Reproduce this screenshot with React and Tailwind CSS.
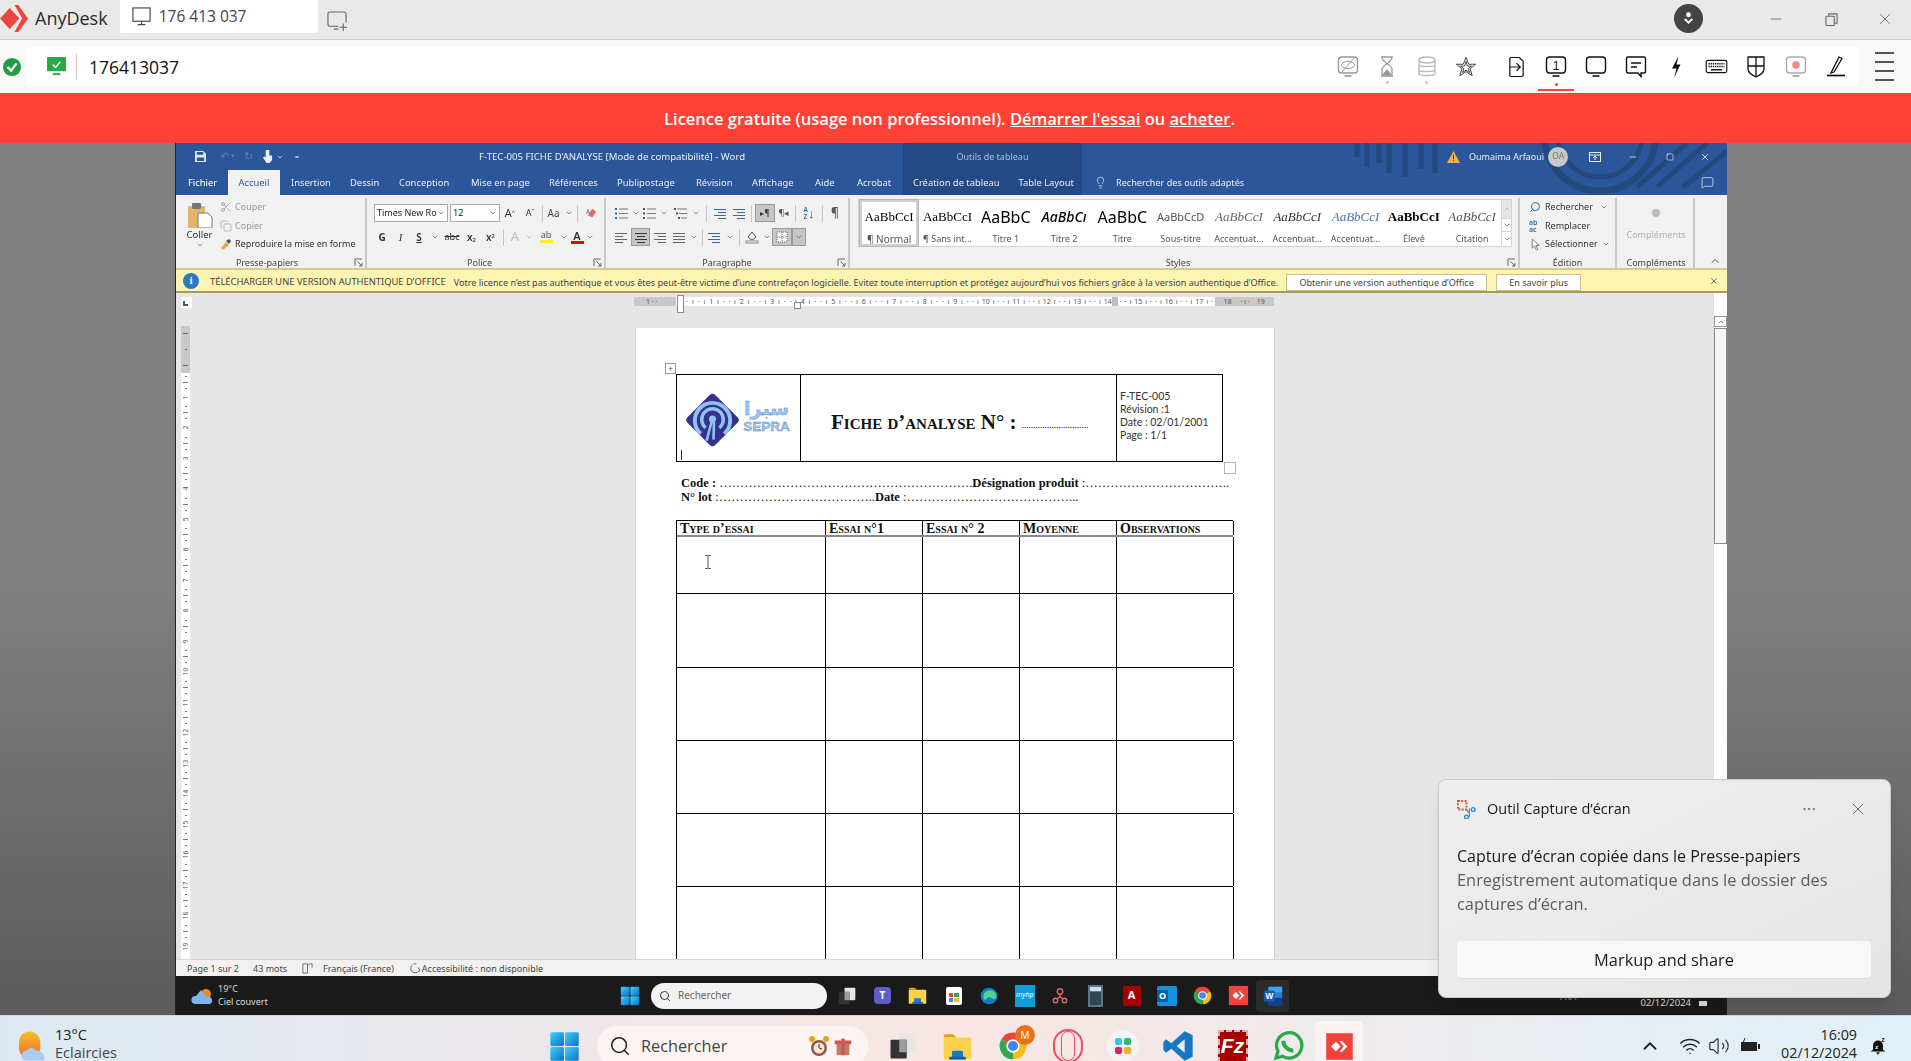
import { ChevronDown, ChevronUp, Lightbulb, Minus, Search, X, Wifi, Volume2, MoreHorizontal, Scissors, Copy, MessageSquare, Square } from 'lucide-react';

const RIBBON_TABS = [
  { label: 'Insertion', w: 'w-[59px]' },
  { label: 'Dessin', w: 'w-[49px]' },
  { label: 'Conception', w: 'w-[72px]' },
  { label: 'Mise en page', w: 'w-[78px]' },
  { label: 'Références', w: 'w-[68px]' },
  { label: 'Publipostage', w: 'w-[79px]' },
  { label: 'Révision', w: 'w-[56px]' },
  { label: 'Affichage', w: 'w-[63px]' },
  { label: 'Aide', w: 'w-[42px]' },
  { label: 'Acrobat', w: 'w-[57px]' },
];

const STYLE_ITEMS = [
  { sample: 'AaBbCcI', label: '¶ Normal', cls: "font-['Liberation_Serif'] text-[13px] text-black", selected: true },
  { sample: 'AaBbCcI', label: '¶ Sans int...', cls: "font-['Liberation_Serif'] text-[13px] text-black" },
  { sample: 'AaBbC', label: 'Titre 1', cls: 'text-[16px] text-black' },
  { sample: 'AaBbCı', label: 'Titre 2', cls: 'text-[14px] italic font-medium text-black' },
  { sample: 'AaBbC', label: 'Titre', cls: 'text-[16px] text-black' },
  { sample: 'AaBbCcD', label: 'Sous-titre', cls: 'text-[11px] text-[#555]' },
  { sample: 'AaBbCcI', label: 'Accentuat...', cls: "font-['Liberation_Serif'] text-[13px] italic text-[#666]" },
  { sample: 'AaBbCcI', label: 'Accentuat...', cls: "font-['Liberation_Serif'] text-[13px] italic text-[#333]" },
  { sample: 'AaBbCcI', label: 'Accentuat...', cls: "font-['Liberation_Serif'] text-[13px] italic text-[#4472c4]" },
  { sample: 'AaBbCcI', label: 'Élevé', cls: "font-['Liberation_Serif'] text-[13px] font-bold text-black" },
  { sample: 'AaBbCcI', label: 'Citation', cls: "font-['Liberation_Serif'] text-[13px] italic text-[#555]" },
];

const HEAD_COLS = ['Type d’essai', 'Essai n°1', 'Essai n° 2', 'Moyenne', 'Observations'];
const ROW_HEIGHTS = ['h-[57px]', 'h-[74px]', 'h-[73px]', 'h-[73px]', 'h-[73px]', 'h-[80px]'];
const CM = [1, 2, 3, 4, 5, 6, 7, 8, 9, 10, 11, 12, 13, 14, 15, 16, 17, 18, 19];

function MonitorIcon({ children, stroke = '#111', stand = '#444', className = 'w-[24px] h-[24px]' }) {
  return (
    <svg viewBox="0 0 24 24" className={className} fill="none">
      <rect x="2.5" y="2" width="19" height="16" rx="3" stroke={stroke} strokeWidth="1.4" />
      <rect x="8.5" y="20" width="7" height="2" fill={stand} />
      {children}
    </svg>
  );
}

function AnyDeskMark({ className }) {
  return (
    <svg viewBox="0 0 30 28" className={className}>
      <path d="M0 14 L10 3 L20 14 L10 25Z" fill="#ef443b" />
      <path d="M15 0 L19 0 L29 14 L19 28 L15 28 L23 14Z" fill="#ef443b" />
    </svg>
  );
}

function WinLogo({ className }) {
  return (
    <svg viewBox="0 0 24 24" className={className}>
      <defs>
        <linearGradient id="wl" x1="0" y1="0" x2="1" y2="1">
          <stop offset="0" stopColor="#3fd0fb" />
          <stop offset="1" stopColor="#0a72c8" />
        </linearGradient>
      </defs>
      <rect x="1" y="1" width="10.6" height="10.6" rx="1" fill="url(#wl)" />
      <rect x="12.4" y="1" width="10.6" height="10.6" rx="1" fill="url(#wl)" />
      <rect x="1" y="12.4" width="10.6" height="10.6" rx="1" fill="url(#wl)" />
      <rect x="12.4" y="12.4" width="10.6" height="10.6" rx="1" fill="url(#wl)" />
    </svg>
  );
}

function ChromeIcon({ className }) {
  return (
    <svg viewBox="0 0 24 24" className={className}>
      <path d="M12 12 L3.3 7A10 10 0 0 1 20.7 7Z" fill="#e8453c" />
      <path d="M12 12 L20.7 7A10 10 0 0 1 12 22Z" fill="#f9bc15" />
      <path d="M12 12 L12 22A10 10 0 0 1 3.3 7Z" fill="#34a853" />
      <circle cx="12" cy="12" r="5" fill="#fff" />
      <circle cx="12" cy="12" r="3.8" fill="#4285f4" />
    </svg>
  );
}

function FolderIcon({ className }) {
  return (
    <svg viewBox="0 0 24 24" className={className}>
      <path d="M2 4.5A1.5 1.5 0 0 1 3.5 3H9l2 2.5H2Z" fill="#e0a210" />
      <rect x="2" y="5.5" width="20" height="16" rx="1" fill="#fbd24c" />
      <rect x="8" y="15" width="8" height="5" rx="1" fill="#1c78c8" />
      <rect x="6" y="19.5" width="12" height="2" fill="#0f5ea8" />
    </svg>
  );
}

function TaskViewIcon({ className }) {
  return (
    <svg viewBox="0 0 24 24" className={className}>
      <rect x="9" y="2" width="13" height="15" rx="1" fill="#e6e6e6" />
      <rect x="2" y="7" width="13" height="15" rx="1" fill="#333" />
      <rect x="9" y="7" width="6" height="10" fill="#9c9c9c" />
    </svg>
  );
}

function WordIcon({ className }) {
  return (
    <svg viewBox="0 0 24 24" className={className}>
      <rect x="7" y="2" width="15" height="20" rx="1" fill="#2b7cd3" />
      <rect x="7" y="2" width="15" height="6" fill="#41a5ee" />
      <rect x="7" y="14" width="15" height="8" fill="#103f91" />
      <rect x="2" y="6" width="12" height="12" rx="1" fill="#185abd" />
      <text x="8" y="15.5" fontSize="9" fontWeight="700" fill="#fff" textAnchor="middle" fontFamily="Liberation Sans">W</text>
    </svg>
  );
}

function AnyDeskTile({ className }) {
  return (
    <svg viewBox="0 0 24 24" className={className}>
      <rect x="1" y="1" width="22" height="22" fill="#ef443b" />
      <path d="M5 12 L9 8 L13 12 L9 16Z" fill="#fff" />
      <path d="M12 7.5 L14 7.5 L18.5 12 L14 16.5 L12 16.5 L15.5 12Z" fill="#fff" />
    </svg>
  );
}

function SmallLines({ align = 'left', color = '#666' }) {
  const rows = [
    { y: 3, w: 12 },
    { y: 6, w: 8 },
    { y: 9, w: 12 },
    { y: 12, w: 8 },
  ];
  return (
    <svg viewBox="0 0 14 15" className="w-[14px] h-[15px]">
      {rows.map((r) => {
        const width = align === 'justify' ? 12 : r.w;
        const x = align === 'center' ? 7 - width / 2 : align === 'right' ? 13 - width : 1;
        return <rect key={r.y} x={x} y={r.y} width={width} height="1" fill={color} />;
      })}
    </svg>
  );
}

function ListIcon({ kind = 'bullet' }) {
  const dot = kind === 'bullet' ? '#2b6cb0' : '#555';
  return (
    <svg viewBox="0 0 15 15" className="w-[15px] h-[15px]">
      {[3, 7.5, 12].map((y, i) => (
        <g key={y}>
          <rect x={kind === 'multi' ? 1 + i * 2 : 1} y={y - 1} width="2" height="2" fill={dot} />
          <rect x={kind === 'multi' ? 4 + i * 2 : 5} y={y - 0.5} width={kind === 'multi' ? 10 - i * 2 : 9} height="1" fill="#777" />
        </g>
      ))}
    </svg>
  );
}

function Caret({ className = 'text-[#555]' }) {
  return <ChevronDown strokeWidth={2} className={`w-[8px] h-[8px] shrink-0 ${className}`} />;
}

function Cell({ w, active, children }) {
  return (
    <div className={`${w} h-[18px] flex items-center justify-center shrink-0 ${active ? 'bg-[#c6c6c6] border border-[#9a9a9a]' : ''}`}>
      {children}
    </div>
  );
}

function Sep({ className = 'mx-[2px]' }) {
  return <div className={`w-px h-[17px] bg-[#c6c6c6] shrink-0 ${className}`} />;
}

function Launcher() {
  return (
    <svg viewBox="0 0 9 9" className="absolute right-[2px] bottom-[3px] w-[9px] h-[9px]" fill="none" stroke="#666" strokeWidth="1">
      <path d="M1 8V1H8" />
      <path d="M3.5 3.5 L8 8 M5 8H8V5" />
    </svg>
  );
}

function Group({ w, label, launcher, labelCls = '', children }) {
  return (
    <div className={`${w} h-[72px] mt-[3px] relative flex flex-col border-r-2 border-[#c8c8c8] shrink-0`}>
      <div className="flex-1 min-h-0">{children}</div>
      <div className={`h-[15px] pt-[1px] text-center text-[9px] leading-[14px] text-[#444] ${labelCls}`}>{label}</div>
      {launcher && <Launcher />}
    </div>
  );
}

function ClipboardGroup() {
  return (
    <Group w="w-[191px]" label="Presse-papiers" launcher labelCls="pr-[7px]">
      <div className="flex">
        <div className="w-[41px] pl-[6px] pt-[4px] flex flex-col items-center">
          <svg viewBox="0 0 26 26" className="w-[26px] h-[26px]">
            <rect x="1" y="4" width="17" height="22" rx="1" fill="#e2b56b" />
            <rect x="5" y="1" width="9" height="6" rx="1" fill="#777" />
            <path d="M11 11H21L25 15V26H11Z" fill="#fff" stroke="#777" />
          </svg>
          <div className="text-[9.5px] leading-[12px] mt-[1px] text-[#333]">Coller</div>
          <Caret />
        </div>
        <div className="ml-[3px] flex flex-col text-[9px] leading-[18.5px]">
          <div className="flex items-center gap-[3px] text-[#9a9a9a]">
            <Scissors className="w-[12px] h-[12px] text-[#aaa]" />
            Couper
          </div>
          <div className="flex items-center gap-[3px] text-[#9a9a9a]">
            <Copy className="w-[12px] h-[12px] text-[#bbb]" />
            Copier
          </div>
          <div className="flex items-center gap-[3px] text-[#333] whitespace-nowrap">
            <svg viewBox="0 0 12 12" className="w-[12px] h-[12px]">
              <path d="M1 10 L6 4 L9 7 L3 12Z" fill="#e2a94a" />
              <path d="M6 3 L9 1 L11 3 L9 6Z" fill="#555" />
            </svg>
            Reproduire la mise en forme
          </div>
        </div>
      </div>
    </Group>
  );
}

function FontGroup() {
  return (
    <Group w="w-[239px]" label="Police" launcher labelCls="pr-[12px]">
      <div className="flex items-center h-[18px] mt-[6px] pl-[7px]">
        <div className="w-[74px] h-[18px] bg-white border border-[#ababab] flex items-center justify-between px-[2px] text-[9px] text-[#222] whitespace-nowrap overflow-hidden">
          Times New Ro
          <Caret />
        </div>
        <div className="w-[50px] ml-[2px] h-[18px] bg-white border border-[#ababab] flex items-center justify-between px-[2px] text-[9px] text-[#222]">
          12
          <Caret />
        </div>
        <Cell w="w-[20px]"><span className="text-[11px] text-[#333]">A<sup className="text-[6px]">^</sup></span></Cell>
        <Cell w="w-[20px]"><span className="text-[9px] text-[#333]">A<sup className="text-[6px]">ˇ</sup></span></Cell>
        <Sep />
        <Cell w="w-[17px]"><span className="text-[10px] text-[#444]">Aa</span></Cell>
        <Cell w="w-[13px]"><Caret /></Cell>
        <Sep />
        <Cell w="w-[22px]">
          <svg viewBox="0 0 14 14" className="w-[13px] h-[13px]">
            <path d="M3 9 L8 2 L12 5 L8 11Z" fill="#e26a6a" />
            <text x="1" y="8" fontSize="7" fill="#666" fontFamily="Noto Sans">A</text>
          </svg>
        </Cell>
      </div>
      <div className="flex items-center h-[18px] mt-[6px] pl-[6px] text-[10px] text-[#333]">
        <Cell w="w-[18px]"><span className="font-bold">G</span></Cell>
        <Cell w="w-[19px]"><span className="italic font-['Liberation_Serif'] text-[11px]">I</span></Cell>
        <Cell w="w-[18px]"><span className="underline font-semibold">S</span></Cell>
        <Cell w="w-[14px]"><Caret /></Cell>
        <Cell w="w-[20px]"><span className="line-through text-[9px]">abc</span></Cell>
        <Cell w="w-[19px]"><span className="font-semibold">x<sub className="text-[6px]">2</sub></span></Cell>
        <Cell w="w-[19px]"><span className="font-semibold">x<sup className="text-[6px]">2</sup></span></Cell>
        <Sep className="mx-[3px]" />
        <Cell w="w-[16px]"><span className="text-[13px] text-[#bbb]">A</span></Cell>
        <Cell w="w-[12px]"><Caret className="text-[#aaa]" /></Cell>
        <Cell w="w-[22px]">
          <div className="flex flex-col items-center leading-[8px]">
            <span className="text-[9px] text-[#555]">ab</span>
            <span className="w-[13px] h-[3px] mt-[1px] bg-[#ffee22]" />
          </div>
        </Cell>
        <Cell w="w-[13px]"><Caret /></Cell>
        <Cell w="w-[14px]">
          <div className="flex flex-col items-center leading-[10px]">
            <span className="text-[11px] font-semibold text-[#333]">A</span>
            <span className="w-[13px] h-[3px] bg-[#e00]" />
          </div>
        </Cell>
        <Cell w="w-[12px]"><Caret /></Cell>
      </div>
    </Group>
  );
}

function ParagraphGroup() {
  return (
    <Group w="w-[244px]" label="Paragraphe" launcher>
      <div className="flex items-center h-[18px] mt-[6px] pl-[5px]">
        <Cell w="w-[20px]"><ListIcon /></Cell>
        <Cell w="w-[10px]"><Caret /></Cell>
        <Cell w="w-[16px]"><ListIcon kind="num" /></Cell>
        <Cell w="w-[14px]"><Caret /></Cell>
        <Cell w="w-[18px]"><ListIcon kind="multi" /></Cell>
        <Cell w="w-[14px]"><Caret /></Cell>
        <Sep className="mx-[3px]" />
        <Cell w="w-[20px]"><SmallLines color="#2b6cb0" align="right" /></Cell>
        <Cell w="w-[18px]"><SmallLines color="#2b6cb0" align="right" /></Cell>
        <Sep className="mx-[3px]" />
        <Cell w="w-[20px]" active><span className="text-[8px] text-[#333]">▸¶</span></Cell>
        <Cell w="w-[18px]"><span className="text-[9px] text-[#555]">¶◂</span></Cell>
        <Sep className="mx-[2px]" />
        <Cell w="w-[22px]">
          <div className="flex items-center">
            <div className="flex flex-col text-[6.5px] leading-[7px] font-semibold">
              <span className="text-[#2b6cb0]">A</span>
              <span className="text-[#2b6cb0]">Z</span>
            </div>
            <span className="text-[13px] leading-[13px] text-[#555]">↓</span>
          </div>
        </Cell>
        <Sep className="mx-[2px]" />
        <Cell w="w-[20px]"><span className="text-[12px] font-semibold text-[#555]">¶</span></Cell>
      </div>
      <div className="flex items-center h-[18px] mt-[6px] pl-[5px]">
        <Cell w="w-[20px]"><SmallLines /></Cell>
        <Cell w="w-[19px]" active><SmallLines align="center" color="#333" /></Cell>
        <Cell w="w-[20px]"><SmallLines align="right" /></Cell>
        <Cell w="w-[18px]"><SmallLines align="justify" /></Cell>
        <Cell w="w-[12px]"><Caret /></Cell>
        <Sep />
        <Cell w="w-[18px]"><SmallLines color="#2b6cb0" align="right" /></Cell>
        <Cell w="w-[14px]"><Caret /></Cell>
        <Sep />
        <Cell w="w-[20px]">
          <svg viewBox="0 0 14 14" className="w-[14px] h-[14px]" fill="none" stroke="#555">
            <path d="M3 7 L7 2 L11 7 L7 10Z" />
            <rect x="1" y="11" width="12" height="2" fill="#fff" stroke="#888" />
          </svg>
        </Cell>
        <Cell w="w-[10px]"><Caret /></Cell>
        <Cell w="w-[20px]" active>
          <svg viewBox="0 0 12 12" className="w-[12px] h-[12px]" fill="none" stroke="#666" strokeDasharray="1 1">
            <rect x="1" y="1" width="10" height="10" fill="#fff" />
            <path d="M6 1V11M1 6H11" />
          </svg>
        </Cell>
        <Cell w="w-[14px]" active><Caret /></Cell>
      </div>
    </Group>
  );
}

function StylesGroup() {
  return (
    <Group w="w-[670px]" label="Styles" launcher labelCls="pr-[12px]">
      <div className="ml-[8px] mt-[1px] w-[654px] h-[48px] flex bg-white border border-[#d4d4d4]">
        <div className="flex-1 flex pl-[1px]">
          {STYLE_ITEMS.map((s, i) => (
            <div
              key={i}
              className={`w-[58.3px] h-[46px] flex flex-col items-center overflow-hidden ${s.selected ? 'border-[2px] border-[#cfcfcf] outline outline-[#b5b5b5] pt-[3px]' : 'pt-[5px]'}`}
            >
              <div className={`h-[22px] leading-[24px] whitespace-nowrap ${s.cls}`}>{s.sample}</div>
              <div className={`mt-[3px] leading-[18px] text-[#555] whitespace-nowrap ${s.selected ? 'text-[10px]' : 'text-[9px]'}`}>{s.label}</div>
            </div>
          ))}
        </div>
        <div className="w-[12px] flex flex-col border-l border-[#d4d4d4] text-[#777]">
          <div className="h-[18px] bg-[#e6e6e6] flex items-center justify-center"><ChevronUp className="w-[8px] h-[8px] text-[#aaa]" /></div>
          <div className="h-[14px] border-y border-[#d4d4d4] flex items-center justify-center"><Caret /></div>
          <div className="flex-1 flex items-center justify-center"><Caret /></div>
        </div>
      </div>
    </Group>
  );
}

function EditGroup() {
  return (
    <Group w="w-[97px]" label="Édition">
      <div className="pl-[9px] flex flex-col text-[9px] leading-[18.5px] text-[#333]">
        <div className="flex items-center gap-[4px]">
          <Search className="w-[12px] h-[12px] text-[#2b6cb0] -scale-x-100" />
          Rechercher
          <Caret className="ml-[3px] text-[#555]" />
        </div>
        <div className="flex items-center gap-[4px]">
          <span className="w-[12px] text-[7px] leading-[7px] font-semibold text-[#2b6cb0]">ab ac</span>
          Remplacer
        </div>
        <div className="flex items-center gap-[4px]">
          <svg viewBox="0 0 12 14" className="w-[12px] h-[13px]" fill="#fff" stroke="#777">
            <path d="M3 1V11L5.5 8.5L7.5 13L9 12L7 8H10.5Z" />
          </svg>
          Sélectionner
          <Caret />
        </div>
      </div>
    </Group>
  );
}

function AddinsGroup() {
  return (
    <Group w="w-[78px]" label="Compléments" labelCls="pl-[2px]">
      <div className="flex flex-col items-center pt-[11px] pl-[2px]">
        <div className="w-[8px] h-[8px] rounded-full bg-[#bdbdbd]" />
        <div className="text-[9px] mt-[11px] text-[#b0b0b0]">Compléments</div>
      </div>
    </Group>
  );
}

function Ribbon() {
  return (
    <div className="h-[75px] flex bg-[#f1f1f1] border-b-2 border-[#d6c98a] relative">
      <ClipboardGroup />
      <FontGroup />
      <ParagraphGroup />
      <StylesGroup />
      <EditGroup />
      <AddinsGroup />
      <ChevronUp className="absolute right-[6px] bottom-[1px] w-[12px] h-[12px] text-[#555]" />
    </div>
  );
}

function HorizontalRuler() {
  return (
    <div className="relative ml-[443px] w-[640px] h-[9px] mt-[4px] flex items-center bg-white text-[7px] leading-[9px] text-[#555]">
      <div className="w-[42px] h-full bg-[#c8c8c8] shrink-0 pl-[12px]">1 · ·</div>
      <div className="w-[20px] shrink-0 flex justify-around pl-[8px]">
        <span>·</span>
        <span>ı</span>
      </div>
      {CM.slice(0, 17).map((n) => (
        <div key={n} className="w-[30.5px] shrink-0 flex justify-around">
          <span>·</span>
          <span>ı</span>
          <span>{n}</span>
          <span>ı</span>
          <span>·</span>
        </div>
      ))}
      <div className="flex-1 h-full bg-[#c8c8c8] flex pl-[9px]">
        <span>18</span>
        <span className="ml-[9px]">· ı ·</span>
        <span className="ml-[7px]">19</span>
      </div>
      <div className="absolute left-[43px] -top-[2px] w-[7px] h-[18px] bg-white border border-[#888]" />
      <div className="absolute left-[160px] top-[5px] w-[7px] h-[7px] bg-white border border-[#888]" />
      <div className="absolute left-[478px] top-0 w-[6px] h-[9px] bg-[#bdbdbd]" />
    </div>
  );
}

function VerticalRuler() {
  return (
    <div className="w-[15px] shrink-0 pl-[5px] flex flex-col bg-[#e6e6e6]">
      <div className="w-[11px] h-[11px] mt-[4px] bg-white flex items-end pl-[2px] pb-[2px]">
        <div className="w-[5px] h-[5px] border-l-2 border-b-2 border-[#555]" />
      </div>
      <div className="w-[9px] h-[47px] mt-[18px] bg-[#c8c8c8] flex flex-col items-center justify-around">
        <div className="w-[5px] h-px bg-[#666]" />
        <div className="w-[2px] h-px bg-[#666]" />
        <div className="w-[5px] h-px bg-[#666]" />
      </div>
      <div className="w-[9px] flex-1 bg-white flex flex-col items-center overflow-hidden">
        {CM.map((n) => (
          <div key={n} className="h-[30.5px] shrink-0 flex flex-col items-center justify-around text-[6.5px] leading-[7px] text-[#555]">
            <div className="w-[2px] h-px bg-[#777]" />
            <div className="w-[5px] h-px bg-[#777]" />
            <div className="w-[2px] h-px bg-[#777]" />
            <div className="-rotate-90">{n}</div>
          </div>
        ))}
      </div>
    </div>
  );
}

function SepraLogo() {
  return (
    <div className="flex items-center pl-[9px] pt-[3px] h-full">
      <svg viewBox="0 0 54 54" className="w-[53px] h-[54px] shrink-0">
        <rect x="7" y="7" width="40" height="40" rx="4" transform="rotate(45 27 27)" fill="#34318f" />
        <path d="M15 41A18 18 0 1 1 39 41" fill="none" stroke="#8fc4ee" strokeWidth="4" />
        <path d="M20 35A11 11 0 1 1 34 35" fill="none" stroke="#8fc4ee" strokeWidth="3.5" />
        <circle cx="27" cy="26" r="3.6" fill="#8fc4ee" />
        <path d="M26 29L21 48M28.5 29L28 47" stroke="#8fc4ee" strokeWidth="2.6" />
      </svg>
      <div className="ml-[4px] w-[47px] flex flex-col items-center">
        <span className="font-['DejaVu_Sans'] font-bold text-[19px] leading-[20px] -mt-[6px] text-[#9cc8ef] [-webkit-text-stroke:0.4px_#5a7ec0]">سبرا</span>
        <span className="font-['Liberation_Sans'] font-bold text-[13.5px] leading-[16px] mt-[1px] text-[#9cc8ef] [-webkit-text-stroke:0.4px_#5a7ec0]">SEPRA</span>
      </div>
    </div>
  );
}

function DocHeader() {
  return (
    <div className="relative w-[547px] h-[88px] grid grid-cols-[124px_316px_107px] border border-black">
      <div className="border-r border-black relative">
        <SepraLogo />
        <div className="absolute left-[4px] bottom-[1px] w-px h-[10px] bg-[#222]" />
      </div>
      <div className="border-r border-black flex items-center pl-[30px] pt-[9px] font-['Liberation_Serif'] font-bold text-[21px] text-[#111] [font-variant-caps:small-caps] whitespace-nowrap">
        Fiche d’analyse N° :
        <span className="ml-[5px] font-normal text-[10px] pt-[4px] tracking-[-0.2px]">.............................</span>
      </div>
      <div className="pl-[3px] flex flex-col justify-center font-['Lato'] text-[10.5px] leading-[13.2px] text-[#333] pb-[4px]">
        <div>F-TEC-005</div>
        <div>Révision :1</div>
        <div>Date : 02/01/2001</div>
        <div>Page : 1/1</div>
      </div>
      <div className="absolute -right-[14px] -bottom-[13px] w-[12px] h-[12px] border border-[#b5b5b5] bg-white" />
      <div className="absolute -left-[12px] -top-[12px] w-[11px] h-[11px] border border-[#999] bg-white flex items-center justify-center text-[9px] leading-none text-[#555]">+</div>
    </div>
  );
}

function DocFields() {
  return (
    <div className="mt-[14px] pl-[5px] font-['Liberation_Serif'] text-[12.5px] leading-[14px] text-[#111] whitespace-nowrap">
      <div>
        <b>Code :</b> …………………………………………………….<b>Désignation produit</b> :…………………………….. 
      </div>
      <div>
        <b>N° lot</b> :………………………………..<b>Date</b> :…………………………………...
      </div>
    </div>
  );
}

function AnalysisTable() {
  return (
    <div className="mt-[16px] w-[557px] border-t border-l border-black font-['Liberation_Serif'] text-[#111]">
      <div className="grid grid-cols-[149px_97px_97px_97px_117px] h-[16px] border-b-2 border-[#8a8a8a] font-bold text-[14px] leading-[15px] [font-variant-caps:small-caps] ">
        {HEAD_COLS.map((c) => (
          <div key={c} className="border-r border-black pl-[3px] whitespace-nowrap overflow-hidden">{c}</div>
        ))}
      </div>
      {ROW_HEIGHTS.map((h, i) => (
        <div key={i} className={`grid grid-cols-[149px_97px_97px_97px_117px] border-b border-black ${h}`}>
          {HEAD_COLS.map((c, j) => (
            <div key={c} className="border-r border-black pl-[27px] pt-[18px]">
              {i === 0 && j === 0 && (
                <svg viewBox="0 0 8 14" className="w-[8px] h-[14px]" fill="none" stroke="#555">
                  <path d="M1 .5H3.5L4 1L4.5 .5H7M4 1V13M1 13.5H3.5L4 13L4.5 13.5H7" />
                </svg>
              )}
            </div>
          ))}
        </div>
      ))}
    </div>
  );
}

function DocArea() {
  return (
    <div className="flex-1 min-h-0 flex bg-[#e6e6e6]">
      <VerticalRuler />
      <div className="flex-1 flex flex-col min-w-0">
        <HorizontalRuler />
        <div className="ml-[444px] mt-[22px] w-[640px] flex-1 min-h-0 bg-white pl-[40px] pt-[46px] overflow-hidden border-x border-[#d2d2d2]">
          <DocHeader />
          <DocFields />
          <AnalysisTable />
        </div>
      </div>
      <div className="w-[14px] shrink-0 flex flex-col bg-white border-l border-[#e0e0e0] pt-[23px]">
        <div className="h-[11px] border border-[#999] flex items-center justify-center"><ChevronUp className="w-[8px] h-[8px] text-[#333]" /></div>
        <div className="h-[216px] mt-[1px] bg-[#f4f4f4] border border-[#8a8a8a]" />
      </div>
    </div>
  );
}

function WordStatusBar() {
  return (
    <div className="h-[17px] flex items-center bg-[#f1f1f1] text-[9px] text-[#444] border-t border-[#d6d6d6] pl-[11px] pt-[1px] whitespace-nowrap">
      <span>Page 1 sur 2</span>
      <span className="ml-[14px]">43 mots</span>
      <svg viewBox="0 0 12 12" className="w-[11px] h-[11px] ml-[15px]" fill="none" stroke="#666">
        <path d="M1 1H6V11H1ZM6 3L8 1H11V5" />
      </svg>
      <span className="ml-[10px]">Français (France)</span>
      <svg viewBox="0 0 14 12" className="w-[13px] h-[11px] ml-[15px]" fill="none" stroke="#555">
        <path d="M4 2A4 4 0 1 0 9 10M5 1H8M10 5L12 8L9 10" />
      </svg>
      <span>Accessibilité : non disponible</span>
    </div>
  );
}

function InnerTaskbar() {
  return (
    <div className="h-[39px] flex items-center bg-[#1a1a1a] pl-[15px] overflow-hidden">
      <svg viewBox="0 0 24 20" className="w-[24px] h-[20px] shrink-0">
        <circle cx="15" cy="8" r="5" fill="#ef8a1e" />
        <path d="M4 18A4 4 0 0 1 5 10L10 4L15 11A4 4 0 0 1 19 18Z" fill="#7fb2ef" />
      </svg>
      <div className="ml-[3px] w-[372px] shrink-0 text-[9px] leading-[12.5px] text-[#ddd]">
        <div>19°C</div>
        <div>Ciel couvert</div>
      </div>
      <WinLogo className="w-[20px] h-[20px] ml-[30px] shrink-0" />
      <div className="w-[176px] h-[26px] ml-[11px] shrink-0 rounded-full bg-[#f2f2f2] flex items-center pl-[8px] text-[10px] text-[#666]">
        <Search className="w-[12px] h-[12px] text-[#333] mr-[7px]" />
        Rechercher
      </div>
      <div className="ml-[2px] flex items-center">
        <div className="w-[35.6px] flex justify-center"><TaskViewIcon className="w-[20px] h-[20px]" /></div>
        <div className="w-[35.6px] flex justify-center">
          <div className="w-[17px] h-[17px] rounded-[4px] bg-[#5b5fc7] text-white text-[10px] font-bold flex items-center justify-center">T</div>
        </div>
        <div className="w-[35.6px] flex justify-center"><FolderIcon className="w-[21px] h-[21px]" /></div>
        <div className="w-[35.6px] flex justify-center">
          <div className="w-[16px] h-[18px] rounded-[2px] bg-white grid grid-cols-2 gap-[1px] p-[3px] pt-[6px]">
            <span className="bg-[#e8453c]" />
            <span className="bg-[#34a853]" />
            <span className="bg-[#4285f4]" />
            <span className="bg-[#f9bc15]" />
          </div>
        </div>
        <div className="w-[35.6px] flex justify-center">
          <svg viewBox="0 0 24 24" className="w-[20px] h-[20px]">
            <circle cx="12" cy="12" r="10" fill="#0f7fc8" />
            <path d="M5 13A8 8 0 0 1 21 13C21 16 16 16 15 14A5 5 0 0 0 8 17C6 16 5 15 5 13Z" fill="#57d28b" />
          </svg>
        </div>
        <div className="w-[35.6px] flex justify-center">
          <div className="w-[20px] h-[22px] bg-[#0f9bd7] text-white text-[7px] italic flex items-center justify-center">myhp</div>
        </div>
        <div className="w-[35.6px] flex justify-center">
          <svg viewBox="0 0 20 20" className="w-[18px] h-[18px]" fill="none" stroke="#d86a6a" strokeWidth="1.6">
            <circle cx="10" cy="5" r="3" />
            <circle cx="5" cy="15" r="2.5" />
            <circle cx="15" cy="15" r="2.5" />
            <path d="M10 8V12M7 13L10 11L13 13" />
          </svg>
        </div>
        <div className="w-[35.6px] flex justify-center">
          <div className="w-[15px] h-[22px] bg-[#5d7585] flex flex-col gap-[1px] p-[2px]">
            <span className="h-[4px] bg-[#cfe0ea]" />
            <span className="flex-1 bg-[#2f4654]" />
          </div>
        </div>
        <div className="w-[35.6px] flex justify-center">
          <div className="w-[18px] h-[20px] bg-[#a40000] text-white text-[11px] font-bold flex items-center justify-center">A</div>
        </div>
        <div className="w-[35.6px] flex justify-center">
          <div className="w-[20px] h-[20px] bg-[#1490df] flex items-center rounded-[2px]">
            <span className="w-[11px] h-[12px] bg-[#0a5ea8] text-white text-[9px] font-bold leading-[12px] text-center">O</span>
          </div>
        </div>
        <div className="w-[35.6px] flex justify-center"><ChromeIcon className="w-[21px] h-[21px]" /></div>
        <div className="w-[35.6px] flex justify-center"><AnyDeskTile className="w-[21px] h-[21px]" /></div>
        <div className="w-[33px] h-[32px] flex items-center justify-center rounded-[4px] bg-[#2b2b2b]"><WordIcon className="w-[22px] h-[22px]" /></div>
      </div>
      <div className="ml-auto mr-[20px] pt-[15px] flex items-center text-[9.5px] leading-[12px] text-[#ddd]">
        <span className="mr-[64px] -translate-y-[6px] text-[#999]">FRA</span>
        <span>02/12/2024</span>
        <span className="ml-[8px] w-[8px] h-[5px] bg-[#ddd]" />
      </div>
    </div>
  );
}

function WordTitleRows() {
  return (
    <div className="relative bg-[#2b579a] text-white">
      <svg viewBox="0 0 380 52" className="absolute right-0 top-0 w-[380px] h-[52px]" fill="none" stroke="#24497f" strokeWidth="5">
        <path d="M10 0V14M20 0V24M32 0V20M42 0V30M58 0V34M74 0V26M88 0V30" />
        <circle cx="253" cy="-8" r="42" strokeWidth="5" />
        <circle cx="253" cy="-8" r="56" strokeWidth="7" />
        <path d="M290 44L340 0M310 44L360 0M336 44L380 8" strokeWidth="5" />
      </svg>
      <div className="relative h-[27px] flex">
        <div className="w-[727px] flex items-center pl-[19px]">
          <svg viewBox="0 0 12 12" className="w-[11px] h-[11px]" fill="#dfe7f3">
            <path d="M0 0H9L12 3V12H0ZM2 1V4H9V1ZM2 7V11H10V7Z" />
          </svg>
          <span className="ml-[14px] text-[11px] text-[#5e82b8]">↶</span>
          <span className="ml-[2px] text-[7px] text-[#5e82b8]">▾</span>
          <span className="ml-[9px] text-[11px] text-[#5e82b8]">↻</span>
          <svg viewBox="0 0 12 14" className="w-[11px] h-[13px] ml-[9px]" fill="#e8eef7">
            <path d="M4 1A2 2 0 0 1 8 1V6H11V11L8 14H5L1 8L3 7L4 8Z" />
          </svg>
          <ChevronDown className="ml-[3px] w-[8px] h-[8px]" />
          <span className="ml-[11px] text-[7px] leading-none">=</span>
          <span className="ml-[180px] pt-[1px] text-[9.6px] text-[#e8eef7] whitespace-nowrap">F-TEC-005 FICHE D’ANALYSE [Mode de compatibilité]  -  Word</span>
        </div>
        <div className="w-[179px] bg-[#234a85] flex items-center justify-center text-[9px] text-[#a9bedd]">Outils de tableau</div>
        <div className="flex-1 flex items-center pl-[365px] text-[9px]">
          <svg viewBox="0 0 14 13" className="w-[13px] h-[12px] shrink-0">
            <path d="M7 0L14 13H0Z" fill="#f3b14b" />
            <path d="M6.5 4H7.5V9H6.5ZM6.5 10H7.5V11H6.5Z" fill="#333" />
          </svg>
          <span className="ml-[9px] pt-[1px] text-[#e8eef7] whitespace-nowrap">Oumaima Arfaoui</span>
          <span className="ml-[4px] w-[20px] h-[20px] shrink-0 rounded-full bg-[#c9c9c9] text-[#777] flex items-center justify-center text-[8.5px]">OA</span>
          <svg viewBox="0 0 12 10" className="ml-[21px] w-[12px] h-[10px] shrink-0" fill="none" stroke="#e8eef7">
            <rect x="0.5" y="0.5" width="11" height="9" />
            <path d="M0 3H12M6 8V4M4 6L6 4L8 6" />
          </svg>
          <Minus className="ml-[27px] w-[10px] h-[10px] shrink-0 text-[#e8eef7]" />
          <Square className="ml-[28px] w-[8px] h-[8px] shrink-0 text-[#e8eef7]" />
          <X className="ml-[26px] w-[10px] h-[10px] shrink-0 text-[#e8eef7]" />
        </div>
      </div>
      <div className="relative h-[25px] flex text-[9.4px] items-stretch">
        <div className="w-[52px] pl-[12px] pt-[1px] flex items-center">Fichier</div>
        <div className="w-[52px] pt-[2px] bg-[#f1f1f1] text-[#2b579a] flex items-center justify-center">Accueil</div>
        {RIBBON_TABS.map((t) => (
          <div key={t.label} className={`${t.w} pl-[11px] pt-[2px] flex items-center text-[#e8eef7] whitespace-nowrap`}>{t.label}</div>
        ))}
        <div className="w-[179px] pt-[2px] bg-[#234a85] flex items-center pl-[10px] text-[#e8eef7]">
          <span>Création de tableau</span>
          <span className="ml-[19px]">Table Layout</span>
        </div>
        <Lightbulb className="ml-[12px] mt-[6px] w-[13px] h-[13px] text-[#dfe7f3]" strokeWidth={1.3} />
        <span className="ml-[9px] pt-[1px] flex items-center text-[9.1px] text-[#e8eef7]">Rechercher des outils adaptés</span>
        <MessageSquare className="ml-auto mr-[13px] mt-[6px] w-[13px] h-[13px] text-[#eef2f9]" strokeWidth={1.3} />
      </div>
    </div>
  );
}

function LicenceNotice() {
  return (
    <div className="h-[23px] flex items-center bg-[#fcf4b0] border-b-2 border-[#a89a54] text-[9.09px] text-[#444] whitespace-nowrap pl-[7px] pt-[4px]">
      <div className="w-[16px] h-[16px] -mt-[4px] shrink-0 rounded-full bg-[#2b7bc4] text-white font-bold text-[11px] flex items-center justify-center font-['Liberation_Serif']">i</div>
      <span className="ml-[11px] text-[9.35px]">TÉLÉCHARGER UNE VERSION AUTHENTIQUE D’OFFICE</span>
      <span className="ml-[8px]">Votre licence n’est pas authentique et vous êtes peut-être victime d’une contrefaçon logicielle. Evitez toute interruption et protégez aujourd’hui vos fichiers grâce à la version authentique d’Office.</span>
      <div className="ml-[8px] w-[201px] h-[17px] shrink-0 bg-white border border-[#c7c08f] flex items-center justify-center">Obtenir une version authentique d’Office</div>
      <div className="ml-[9px] w-[85px] h-[17px] shrink-0 bg-white border border-[#c7c08f] flex items-center justify-center">En savoir plus</div>
      <X className="ml-auto mr-[8px] -mt-[3px] w-[10px] h-[10px] text-[#666]" />
    </div>
  );
}

function WordWindow() {
  return (
    <div className="w-[1552px] shrink-0 flex flex-col border-l border-[#222] font-['Noto_Sans'] blur-[0.3px]">
      <WordTitleRows />
      <Ribbon />
      <LicenceNotice />
      <DocArea />
      <WordStatusBar />
      <InnerTaskbar />
    </div>
  );
}

function ScreenshotToast() {
  return (
    <div className="absolute left-[1438px] top-[636px] w-[453px] h-[219px] rounded-[8px] border border-[#c9c9c9] bg-gradient-to-br from-[#efefef] to-[#e5e5e5] shadow-lg pl-[18px] pr-[19px] pt-[20px] text-[#1a1a1a] z-10">
      <div className="flex items-center h-[18px]">
        <svg viewBox="0 0 20 20" className="w-[19px] h-[19px]">
          <rect x="1" y="1" width="9" height="9" fill="none" stroke="#d84a2b" strokeWidth="2" strokeDasharray="2 1.5" />
          <path d="M9 9L13 14M13 9V18" stroke="#888" strokeWidth="1.4" />
          <circle cx="17" cy="10" r="2" fill="none" stroke="#1b8fe0" strokeWidth="1.4" />
          <circle cx="10" cy="18" r="2" fill="none" stroke="#1b8fe0" strokeWidth="1.4" />
        </svg>
        <span className="ml-[11px] text-[14.5px]">Outil Capture d’écran</span>
        <MoreHorizontal className="ml-auto w-[16px] h-[16px] text-[#666]" strokeWidth={1.4} />
        <X className="ml-[31px] mr-[3px] w-[20px] h-[20px] text-[#555]" strokeWidth={1} />
      </div>
      <div className="mt-[26px] text-[16px] leading-[24px]">Capture d’écran copiée dans le Presse-papiers</div>
      <div className="text-[16.4px] leading-[24px] text-[#5c5c5c] w-[390px]">Enregistrement automatique dans le dossier des captures d’écran.</div>
      <div className="mt-[25px] pt-[1px] h-[38px] rounded-[4px] bg-[#f8f8f8] border-b border-[#d8d8d8] flex items-center justify-center text-[16.4px]">Markup and share</div>
    </div>
  );
}

function TopBars() {
  return (
    <>
      <div className="h-[40px] flex items-start bg-[#e9e9e9] border-b border-[#cfcfcf] shrink-0">
        <AnyDeskMark className="w-[29px] h-[27px] mt-[5px]" />
        <span className="ml-[6px] mt-[5px] text-[18px] leading-[26px] font-medium text-[#2a2a2a]">AnyDesk</span>
        <div className="ml-[12px] w-[198px] h-[33px] bg-white rounded-b-[2px] flex items-center pl-[12px] text-[15.5px] text-[#444]">
          <svg viewBox="0 0 20 20" className="w-[19px] h-[19px]" fill="none" stroke="#444" strokeWidth="1.2">
            <rect x="1" y="1" width="18" height="14" />
            <path d="M10 15V18M6 18.5H14" />
          </svg>
          <span className="ml-[8px]">176 413 037</span>
        </div>
        <svg viewBox="0 0 22 22" className="ml-[9px] mt-[11px] w-[21px] h-[21px]" fill="none" stroke="#666" strokeWidth="1.2">
          <path d="M12 16H3A2 2 0 0 1 1 14V3A2 2 0 0 1 3 1H18A2 2 0 0 1 20 3V12" />
          <path d="M7 19H12M17 13V21M13 17H21" />
        </svg>
        <div className="ml-auto mr-[9px] mt-[4px] w-[29px] h-[29px] rounded-full bg-[#444] flex items-center justify-center">
          <svg viewBox="0 0 14 16" className="w-[13px] h-[15px]" fill="#fff">
            <circle cx="7" cy="4" r="2.6" />
            <path d="M2 9L7 14L12 9L10 8L7 11L4 8Z" />
          </svg>
        </div>
        <Minus className="ml-[56px] mt-[11px] w-[16px] h-[16px] text-[#666]" strokeWidth={1.3} />
        <svg viewBox="0 0 14 14" className="ml-[41px] mt-[13px] w-[13px] h-[13px]" fill="none" stroke="#666" strokeWidth="1.2">
          <rect x="1" y="3.5" width="9" height="10" rx="1" />
          <path d="M4 3V1H13V11H10.5" />
        </svg>
        <X className="ml-[38px] mr-[17px] mt-[10px] w-[18px] h-[18px] text-[#666]" strokeWidth={1.2} />
      </div>
      <div className="h-[53px] flex items-center bg-[#f8f8f8] shrink-0">
        <svg viewBox="0 0 22 24" className="ml-[2px] w-[20px] h-[24px] shrink-0">
          <circle cx="11" cy="12" r="10" fill="#1e9d41" />
          <path d="M6 12L10 16L16 8" fill="none" stroke="#fff" strokeWidth="2.6" />
        </svg>
        <div className="ml-[4px] flex-1 h-[40px] bg-white rounded-[4px] flex items-center">
          <svg viewBox="0 0 22 22" className="ml-[20px] w-[21px] h-[21px] shrink-0">
            <rect x="1" y="1" width="20" height="15" rx="1" fill="#2aa84a" />
            <rect x="7" y="18" width="8" height="2" fill="#2aa84a" />
            <path d="M7 9L10 12L15 6" fill="none" stroke="#fff" strokeWidth="1.4" />
          </svg>
          <div className="ml-[9px] w-px h-[26px] bg-[#c8c8c8]" />
          <span className="ml-[12px] pt-[2px] text-[17.5px] text-[#111]">176413037</span>
          <div className="ml-auto flex items-center pr-[1px]">
            <div className="w-[39.5px] flex justify-center">
              <MonitorIcon stroke="#999" stand="#aaa">
                <path d="M5 10C8 5 16 5 19 10C16 15 8 15 5 10Z M6 17L18 3" stroke="#999" strokeWidth="1" />
              </MonitorIcon>
            </div>
            <div className="relative w-[39.5px] flex justify-center">
              <svg viewBox="0 0 20 24" className="w-[20px] h-[24px]" fill="none" stroke="#999" strokeWidth="1.3">
                <path d="M4 2H16M4 21H16M5 2C5 8 15 10 15 14C15 16 15 19 15 21M15 2C15 8 5 10 5 14V21" />
                <path d="M6 20L10 15L14 20Z" fill="#999" />
              </svg>
              <div className="absolute left-[18px] top-[26px] w-[3px] h-[3px] rounded-full bg-[#f5b5b2]" />
            </div>
            <div className="relative w-[39.5px] flex justify-center">
              <svg viewBox="0 0 20 24" className="w-[20px] h-[24px]" fill="none" stroke="#bbb" strokeWidth="1.4">
                <ellipse cx="10" cy="5" rx="8" ry="3" />
                <path d="M2 5V19C2 21 18 21 18 19V5M2 10C2 12 18 12 18 10M2 15C2 17 18 17 18 15" />
              </svg>
              <div className="absolute left-[18px] top-[26px] w-[3px] h-[3px] rounded-full bg-[#f5b5b2]" />
            </div>
            <div className="w-[39.5px] flex justify-center">
              <svg viewBox="0 0 24 24" className="w-[22px] h-[22px]" fill="none" stroke="#333" strokeWidth="1">
                <path d="M12 1.5L15 9H22.5L16.5 13.8L18.7 21.5L12 17L5.3 21.5L7.5 13.8L1.5 9H9Z" />
                <path d="M12 6L13.5 11H18L14.5 13.8L15.8 18L12 15.5L8.2 18L9.5 13.8L6 11H10.5Z" />
              </svg>
            </div>
          </div>
          <div className="ml-[9px] mr-[2px] flex items-center">
            <div className="w-[40px] flex justify-center">
              <svg viewBox="0 0 20 24" className="w-[19px] h-[24px]" fill="none" stroke="#111" strokeWidth="1.3">
                <path d="M4 2H13L17 6V20A1.5 1.5 0 0 1 15.5 22H4A1.5 1.5 0 0 1 3 20V3A1 1 0 0 1 4 2Z" />
                <path d="M3 12H14M10 8L14 12L10 16" />
              </svg>
            </div>
            <div className="w-[40px] flex flex-col items-center relative">
              <MonitorIcon>
                <text x="12" y="15" fontSize="12" textAnchor="middle" fill="#111" fontFamily="Liberation Sans">1</text>
              </MonitorIcon>
              <div className="absolute left-[2px] top-[34px] w-[36px] h-[2px] bg-[#ef443b]" />
              <div className="absolute left-[19px] top-[28px] w-[3px] h-[3px] rounded-full bg-[#ef443b]" />
            </div>
            <div className="w-[40px] flex justify-center"><MonitorIcon /></div>
            <div className="w-[40px] flex justify-center">
              <svg viewBox="0 0 22 24" className="w-[22px] h-[24px]" fill="none" stroke="#111" strokeWidth="1.4">
                <path d="M3 2H19A1.5 1.5 0 0 1 20.5 3.5V16.5A1.5 1.5 0 0 1 19 18H16V21.5L13 18H3A1.5 1.5 0 0 1 1.5 16.5V3.5A1.5 1.5 0 0 1 3 2Z" />
                <path d="M6 8H16M6 12H12" />
              </svg>
            </div>
            <div className="w-[40px] flex justify-center">
              <svg viewBox="0 0 20 24" className="w-[20px] h-[24px]" fill="#111">
                <path d="M12.5 1L6 13.5H10.5L8 23L14.5 9.5H10.5Z" />
              </svg>
            </div>
            <div className="w-[40px] flex justify-center">
              <svg viewBox="0 0 24 16" className="w-[23px] h-[15px]" fill="none" stroke="#111" strokeWidth="1.2">
                <rect x="1" y="1.5" width="22" height="13" rx="2" />
                <path d="M3.5 5H20.5M3.5 8H20.5" strokeDasharray="1.4 0.9" strokeWidth="1.5" />
                <path d="M6 11.5H18" strokeWidth="1.5" />
              </svg>
            </div>
            <div className="w-[40px] flex justify-center">
              <svg viewBox="0 0 20 24" className="w-[20px] h-[24px]" fill="none" stroke="#111" strokeWidth="1.3">
                <path d="M2 2H18V14C18 18 14 20 10 22C6 20 2 18 2 14Z M10 2V22 M2 11H18" />
              </svg>
            </div>
            <div className="w-[40px] flex justify-center">
              <MonitorIcon stroke="#aaa" stand="#aaa">
                <circle cx="12" cy="10" r="3.8" fill="#f08a85" />
              </MonitorIcon>
            </div>
            <div className="w-[40px] flex justify-center">
              <svg viewBox="0 0 20 24" className="w-[20px] h-[24px]" fill="none" stroke="#111" strokeWidth="1.3">
                <path d="M13 2L16 3.5L8 17L5 18Z" />
                <path d="M1 20.5H19" strokeWidth="1.7" />
              </svg>
            </div>
          </div>
        </div>
        <div className="ml-[17px] mr-[17px] w-[19px] flex flex-col gap-[7px]">
          <div className="h-[2px] bg-[#555]" />
          <div className="h-[2px] bg-[#555]" />
          <div className="h-[2px] bg-[#555]" />
          <div className="h-[2px] bg-[#555]" />
        </div>
      </div>
      <div className="h-[50px] shrink-0 flex items-center justify-center bg-[#ff4136] text-white text-[16.5px] font-semibold pr-[12px] pt-[2px]">
        <span>Licence gratuite (usage non professionnel). <u>Démarrer l'essai</u> ou <u>acheter</u>.</span>
      </div>
    </>
  );
}

function WinTaskbar() {
  return (
    <div className="h-[46px] shrink-0 border-t border-[#cfd4d8] bg-gradient-to-r from-[#dce9f3] via-[#f8e6e3] to-[#dff0f8] text-[#222] overflow-hidden">
      <div className="h-[60px] flex items-center">
        <svg viewBox="0 0 30 34" className="ml-[18px] w-[29px] h-[34px] shrink-0">
          <defs>
            <linearGradient id="sun" x1="0" y1="0" x2="0" y2="1">
              <stop offset="0" stopColor="#f6c02c" />
              <stop offset="1" stopColor="#ef6a2a" />
            </linearGradient>
          </defs>
          <rect x="1" y="2" width="22" height="28" rx="11" fill="url(#sun)" />
          <path d="M8 32A5 5 0 0 1 9 22C11 18 17 18 19 22C24 21 29 26 27 32Z" fill="#a8cdf2" />
        </svg>
        <div className="ml-[8px] w-[72px] shrink-0 -mt-[4px] text-[14.5px] leading-[18px]">
          <div>13°C</div>
          <div className="text-[#444]">Eclaircies</div>
        </div>
        <WinLogo className="w-[31px] h-[31px] ml-[422px] shrink-0" />
        <div className="ml-[16px] w-[273px] h-[42px] shrink-0 rounded-full bg-[#fbf4f2] border border-[#eee] flex items-center pl-[12px] text-[16.3px] text-[#444]">
          <Search className="w-[22px] h-[22px] text-[#222]" strokeWidth={1.7} />
          <span className="ml-[10px]">Rechercher</span>
          <svg viewBox="0 0 24 24" className="ml-[80px] w-[24px] h-[26px]">
            <circle cx="12" cy="14" r="8" fill="#8a5a4a" />
            <circle cx="12" cy="14" r="5.5" fill="#f3e5d8" />
            <path d="M12 10V14L15 15" stroke="#333" fill="none" />
            <circle cx="5" cy="5" r="3" fill="#f0a020" />
            <circle cx="19" cy="5" r="3" fill="#f0a020" />
          </svg>
          <svg viewBox="0 0 24 24" className="ml-[1px] w-[22px] h-[26px]">
            <rect x="5" y="8" width="14" height="14" fill="#b98068" />
            <rect x="10" y="4" width="4" height="18" fill="#d9534f" />
            <rect x="3" y="6" width="18" height="4" fill="#d9534f" />
          </svg>
        </div>
        <div className="ml-[6px] flex items-center">
          <div className="w-[55px] flex justify-center"><TaskViewIcon className="w-[30px] h-[30px]" /></div>
          <div className="w-[55px] flex justify-center"><FolderIcon className="w-[33px] h-[33px]" /></div>
          <div className="w-[55px] flex justify-center relative">
            <ChromeIcon className="w-[32px] h-[32px]" />
            <div className="absolute right-[5px] -top-[5px] w-[20px] h-[20px] rounded-full bg-[#e8721c] text-white text-[10px] flex items-center justify-center">M</div>
          </div>
          <div className="w-[55px] flex justify-center">
            <div className="w-[30px] h-[34px] rounded-full border-[2.5px] border-[#f04a66] flex justify-center">
              <div className="w-[14px] rounded-full border-[1.5px] border-[#f04a66]" />
            </div>
          </div>
          <div className="w-[55px] flex justify-center">
            <div className="w-[32px] h-[32px] rounded-full bg-[#f3f3f3] grid grid-cols-2 gap-[2px] p-[8px]">
              <span className="rounded-[2px] bg-[#36c5f0]" />
              <span className="rounded-[2px] bg-[#2eb67d]" />
              <span className="rounded-[2px] bg-[#e01e5a]" />
              <span className="rounded-[2px] bg-[#ecb22e]" />
            </div>
          </div>
          <div className="w-[55px] flex justify-center">
            <svg viewBox="0 0 24 24" className="w-[32px] h-[32px]" fill="#1678c2">
              <path d="M17 1L23 4V20L17 23L7 14L3 17L1 15V9L3 7L7 10ZM17 7L11 12L17 17Z" />
            </svg>
          </div>
          <div className="w-[55px] flex justify-center">
            <div className="w-[30px] h-[33px] bg-[#a80000] border-2 border-dashed border-[#d8b0b0] flex items-center justify-center text-white text-[21px] font-bold italic font-['Liberation_Sans']">Fz</div>
          </div>
          <div className="w-[55px] flex justify-center">
            <svg viewBox="0 0 24 24" className="w-[32px] h-[32px]" fill="none" stroke="#2aa84a" strokeWidth="2.4">
              <path d="M3 21L4.5 16A9.5 9.5 0 1 1 8 19.7Z" />
              <path d="M8.5 8C8.5 12 12 15.5 16 15.5" strokeWidth="3" />
            </svg>
          </div>
          <div className="w-[48px] h-[50px] flex items-center justify-center rounded-t-[4px] bg-[#f9f3f1]"><AnyDeskTile className="w-[29px] h-[29px]" /></div>
        </div>
        <div className="ml-auto flex items-center">
          <ChevronUp className="w-[22px] h-[22px] text-[#222]" strokeWidth={2} />
          <Wifi className="ml-[18px] w-[22px] h-[22px] text-[#222]" strokeWidth={1.6} />
          <Volume2 className="ml-[7px] w-[22px] h-[22px] text-[#333]" strokeWidth={1.3} />
          <svg viewBox="0 0 22 16" className="ml-[9px] w-[22px] h-[16px]" fill="#222">
            <path d="M2 4H18V13H2Z" />
            <rect x="19" y="6" width="2" height="5" />
            <path d="M6 0L4 5H7L5 9" stroke="#222" fill="none" />
          </svg>
          <div className="ml-[20px] -mt-[4px] text-right text-[14.3px] leading-[18px] text-[#222]">
            <div>16:09</div>
            <div>02/12/2024</div>
          </div>
          <svg viewBox="0 0 20 22" className="ml-[12px] mr-[24px] w-[18px] h-[20px]" fill="#111">
            <path d="M10 5A5.5 5.5 0 0 1 15.5 10.5V15L18 17H2L4.5 15V10.5A5.5 5.5 0 0 1 10 5ZM8 18H12L10 21Z" />
            <text x="7" y="14" fontSize="6.5" fill="#fff" fontFamily="Liberation Sans" fontWeight="700">z</text>
            <text x="14" y="6" fontSize="7" fill="#111" fontFamily="Liberation Sans" fontWeight="700">z</text>
          </svg>
        </div>
      </div>
    </div>
  );
}

export default function App() {
  return (
    <div className="w-[1911px] h-[1061px] flex flex-col overflow-hidden font-['Open_Sans',sans-serif] bg-[#808080]">
      <TopBars />
      <div className="relative flex-1 min-h-0 flex bg-gradient-to-b from-[#808080] via-[#808080] to-[#5b5b5b]">
        <div className="w-[175px] shrink-0" />
        <WordWindow />
        <ScreenshotToast />
      </div>
      <WinTaskbar />
    </div>
  );
}
